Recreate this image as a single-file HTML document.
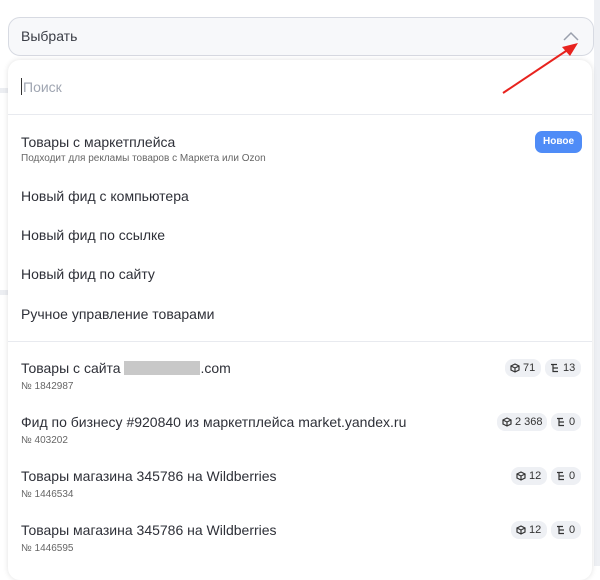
<!DOCTYPE html>
<html><head><meta charset="utf-8"><style>
*{box-sizing:border-box;margin:0;padding:0}
body{width:600px;height:566px;overflow:hidden;background:#fff;font-family:"Liberation Sans",sans-serif;color:#333;position:relative}
.bgl{position:absolute;left:0;width:8px;height:5px;background:#eceef2}
.sel{position:absolute;left:8px;top:17px;width:586px;height:39px;border:1px solid #d7dae2;border-radius:12px;background:#f7f8fa}
.sel span{position:absolute;left:12px;top:10px;font-size:14px;color:#3a3d45}
.panel{position:absolute;left:8px;top:60px;width:584px;height:520px;background:#fff;border-radius:12px;box-shadow:0 0 6px rgba(0,0,0,.12)}
.t{position:absolute;left:13px;font-size:14px;color:#2e3038}
.s{position:absolute;left:13px;font-size:10px;color:#666}
.hr{position:absolute;left:0;right:0;height:1px;background:#e8eaef}
.pill{position:absolute;height:18px;border-radius:8px;background:#eef0f4;font-size:11px;color:#333;line-height:18px;padding-left:18px}
.pill svg{position:absolute;left:5px;top:4px}
.right{position:absolute;right:0;top:0;width:6px;height:566px;background:#eef0f4}
</style></head><body>
<div class="right"></div>
<div class="bgl" style="top:88px"></div>
<div class="bgl" style="top:290px"></div>
<div class="sel"><span>Выбрать</span>
<svg style="position:absolute;right:14px;top:13px" width="16" height="10" viewBox="0 0 16 10"><path d="M1 9L8 2L15 9" fill="none" stroke="#9aa0ac" stroke-width="1.5"/></svg></div>
<div class="panel">
<div style="position:absolute;left:13px;top:18px;width:1px;height:17px;background:#333"></div>
<div class="t" style="top:19px;left:15px;color:#a0a6b2;font-size:14px">Поиск</div>
<div class="hr" style="top:54px"></div>
<div class="t" style="top:74px">Товары с маркетплейса</div>
<div class="s" style="top:93px">Подходит для рекламы товаров с Маркета или Ozon</div>
<div style="position:absolute;left:527px;top:71px;width:47px;height:22px;border-radius:7px;background:#4f8cf7;color:#fff;font-size:10px;font-weight:bold;text-align:center;line-height:22px">Новое</div>
<div class="t" style="top:128px">Новый фид с компьютера</div>
<div class="t" style="top:167px">Новый фид по ссылке</div>
<div class="t" style="top:206px">Новый фид по сайту</div>
<div class="t" style="top:246px">Ручное управление товарами</div>
<div class="hr" style="top:281px"></div>

<div class="t" style="top:300px">Товары с сайта <span style="display:inline-block;width:76px;height:14px;background:#c8c8c8;vertical-align:-2px"></span>.com</div>
<div class="s" style="top:321px">№ 1842987</div>
<div class="pill" style="left:497px;top:299px;width:36px"><svg width="10" height="10" viewBox="0 0 10 10"><path d="M5 1L9 3V7L5 9L1 7V3ZM1 3L5 5L9 3M5 5V9" fill="none" stroke="#333" stroke-width="1.2"/></svg>71</div>
<div class="pill" style="left:537px;top:299px;width:36px"><svg width="10" height="10" viewBox="0 0 10 10"><path d="M1 1.5H7M3 1.5V8.5H8M3 5H8" fill="none" stroke="#333" stroke-width="1.2"/></svg>13</div>

<div class="t" style="top:354px">Фид по бизнесу #920840 из маркетплейса market.yandex.ru</div>
<div class="s" style="top:375px">№ 403202</div>
<div class="pill" style="left:489px;top:353px;width:50px"><svg width="10" height="10" viewBox="0 0 10 10"><path d="M5 1L9 3V7L5 9L1 7V3ZM1 3L5 5L9 3M5 5V9" fill="none" stroke="#333" stroke-width="1.2"/></svg>2 368</div>
<div class="pill" style="left:543px;top:353px;width:30px"><svg width="10" height="10" viewBox="0 0 10 10"><path d="M1 1.5H7M3 1.5V8.5H8M3 5H8" fill="none" stroke="#333" stroke-width="1.2"/></svg>0</div>

<div class="t" style="top:408px">Товары магазина 345786 на Wildberries</div>
<div class="s" style="top:429px">№ 1446534</div>
<div class="pill" style="left:503px;top:407px;width:36px"><svg width="10" height="10" viewBox="0 0 10 10"><path d="M5 1L9 3V7L5 9L1 7V3ZM1 3L5 5L9 3M5 5V9" fill="none" stroke="#333" stroke-width="1.2"/></svg>12</div>
<div class="pill" style="left:543px;top:407px;width:30px"><svg width="10" height="10" viewBox="0 0 10 10"><path d="M1 1.5H7M3 1.5V8.5H8M3 5H8" fill="none" stroke="#333" stroke-width="1.2"/></svg>0</div>

<div class="t" style="top:462px">Товары магазина 345786 на Wildberries</div>
<div class="s" style="top:483px">№ 1446595</div>
<div class="pill" style="left:503px;top:461px;width:36px"><svg width="10" height="10" viewBox="0 0 10 10"><path d="M5 1L9 3V7L5 9L1 7V3ZM1 3L5 5L9 3M5 5V9" fill="none" stroke="#333" stroke-width="1.2"/></svg>12</div>
<div class="pill" style="left:543px;top:461px;width:30px"><svg width="10" height="10" viewBox="0 0 10 10"><path d="M1 1.5H7M3 1.5V8.5H8M3 5H8" fill="none" stroke="#333" stroke-width="1.2"/></svg>0</div>
</div>
<svg style="position:absolute;left:0;top:0" width="600" height="566"><path d="M503 93L572 47" stroke="#e8231e" stroke-width="2"/><path d="M578 43L562 47L570 56Z" fill="#e8231e"/></svg>
</body></html>
